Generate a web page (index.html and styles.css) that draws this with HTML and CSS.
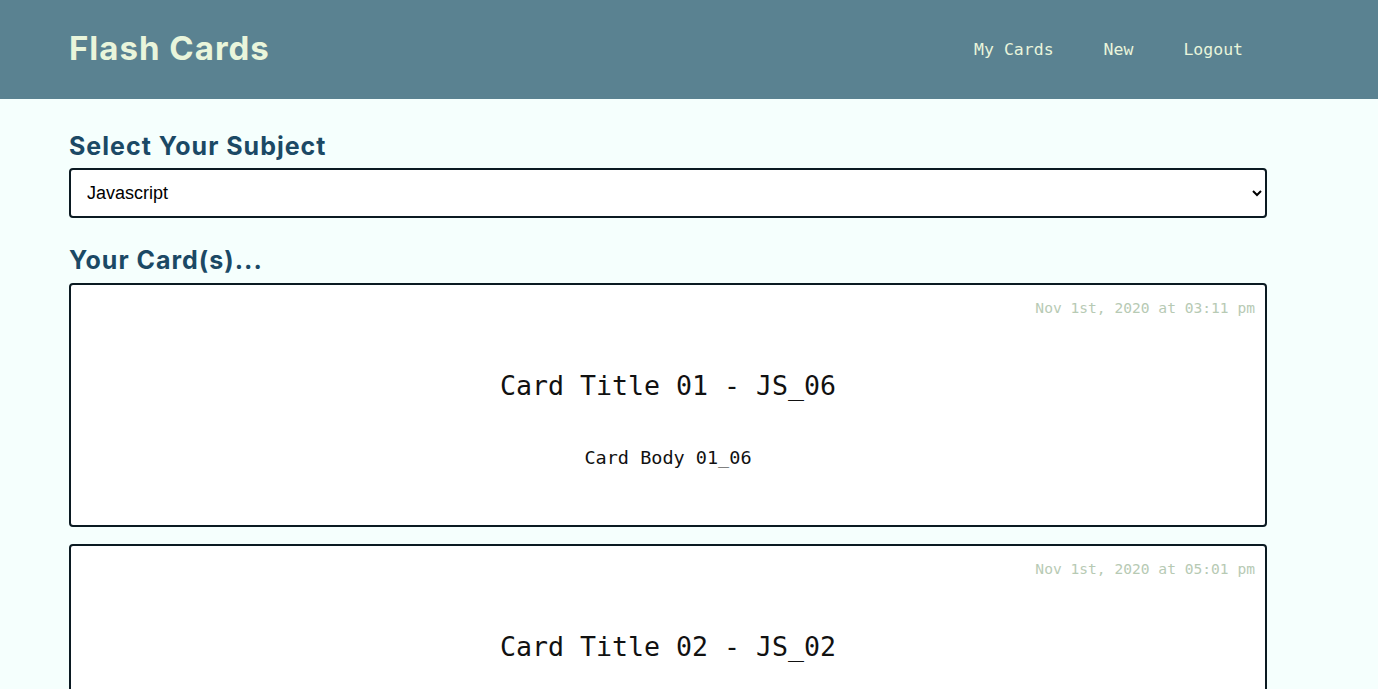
FILE: index.html
```html
<!DOCTYPE html>
<html lang="en">
<head>
<meta charset="utf-8">
<title>Flash Cards</title>
<link rel="stylesheet" href="styles.css">
</head>
<body>
<header class="topbar">
  <h1 class="brand">Flash Cards</h1>
  <nav class="nav">
    <a class="nav-link" href="#">My Cards</a>
    <a class="nav-link" href="#">New</a>
    <a class="nav-link" href="#">Logout</a>
  </nav>
</header>
<main class="content">
  <h2 class="section-title">Select Your Subject</h2>
  <select class="subject-select">
    <option>Javascript</option>
  </select>
  <h2 class="section-title cards-title">Your Card(s)...</h2>
  <div class="card-list">
    <article class="card">
      <div class="card-date">Nov 1st, 2020 at 03:11 pm</div>
      <div class="card-title">Card Title 01 - JS_06</div>
      <div class="card-body">Card Body 01_06</div>
    </article>
    <article class="card">
      <div class="card-date">Nov 1st, 2020 at 05:01 pm</div>
      <div class="card-title">Card Title 02 - JS_02</div>
      <div class="card-body">Card Body 02_02</div>
    </article>
  </div>
</main>
</body>
</html>
```
FILE: styles.css
```css
* { box-sizing: border-box; }
html, body { margin: 0; padding: 0; }
body {
  background: #f5fffd;
  font-family: "DejaVu Sans Mono", monospace;
}
.topbar {
  height: 99px;
  background: #5a8291;
  display: flex;
  align-items: center;
  justify-content: space-between;
  padding: 0 135px 3px 69px;
}
.brand {
  margin: 0;
  font-family: Inter, "Open Sans", sans-serif;
  font-weight: 700;
  font-size: 33px;
  color: #e9f5db;
  letter-spacing: 1px;
}
.nav { display: flex; gap: 50px; padding-top: 3px; }
.nav-link {
  font-family: "DejaVu Sans Mono", monospace;
  font-size: 16.5px;
  color: #e9f5db;
  text-decoration: none;
}
.content {
  width: 1198px;
  margin-left: 69px;
  padding-top: 29px;
}
.section-title {
  margin: 0 0 4px 0;
  font-family: Inter, "Open Sans", sans-serif;
  font-weight: 700;
  font-size: 25px;
  color: #1b4965;
  line-height: 36px;
  letter-spacing: 1px;
}
.cards-title { margin-top: 24px; margin-bottom: 5px; }
.subject-select {
  display: block;
  width: 100%;
  height: 50px;
  border: 2px solid #0b1a22;
  border-radius: 4px;
  background: #fff;
  font-family: "Liberation Sans", Arial, sans-serif;
  font-size: 18px;
  padding: 0 12px;
  color: #000;
}
.card-list { display: flex; flex-direction: column; gap: 17px; }
.card {
  height: 244px;
  background: #fff;
  border: 2px solid #0b1a22;
  border-radius: 4px;
  display: flex;
  flex-direction: column;
  align-items: center;
  padding: 13px 10px 0;
}
.card-date {
  align-self: flex-end;
  font-size: 14.6px;
  color: #b7cab4;
  line-height: 20px;
}
.card-title {
  margin-top: 51px;
  font-size: 26.6px;
  color: #111;
  line-height: 34px;
}
.card-body {
  margin-top: 43px;
  font-size: 18.5px;
  color: #111;
  line-height: 24px;
}
```
